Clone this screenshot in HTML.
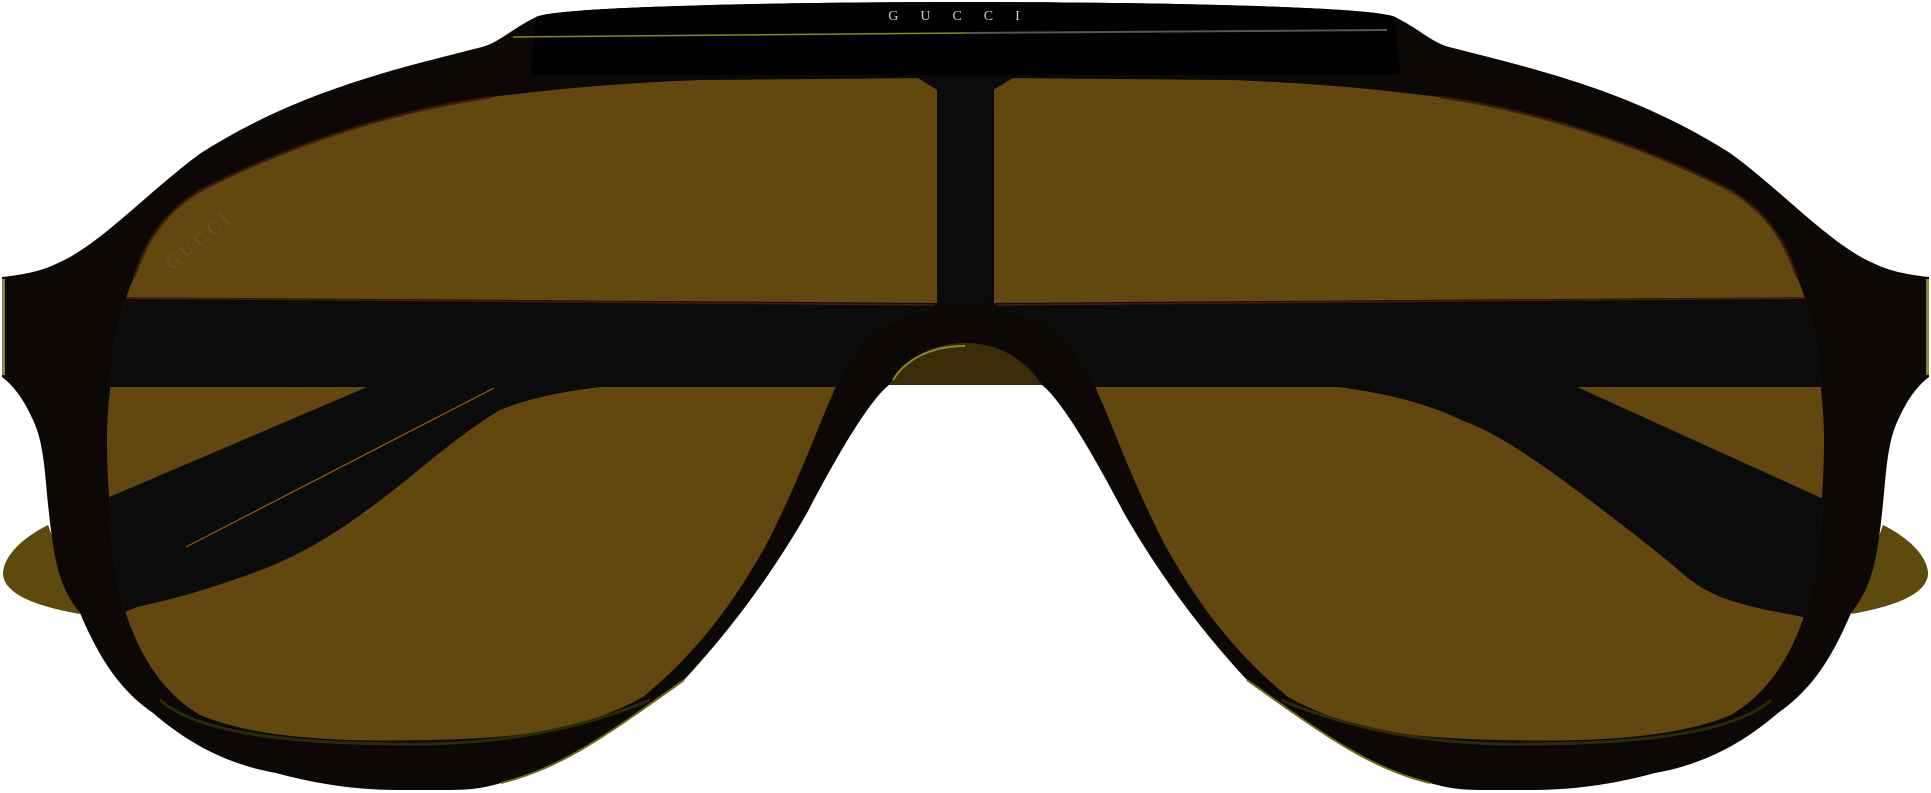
<!DOCTYPE html>
<html><head><meta charset="utf-8"><style>
html,body{margin:0;padding:0;background:#fff;width:1931px;height:793px;overflow:hidden}
svg{display:block}
</style></head><body>
<svg width="1931" height="793" viewBox="0 0 1931 793" xmlns="http://www.w3.org/2000/svg">
<defs>
<clipPath id="lensL"><path id="pl" d="M937,78 L700,80 C600,84 550,90 491,97 C400,110 300,140 201,190 C160,215 145,245 134,277 C120,310 112,350 110,390 C105,430 107,470 110,510 C112,600 140,680 200,715 C260,740 350,742 430,740 C480,739 520,736 551,730 C590,722 620,710 643,697 C700,650 735,600 765,547 C800,480 820,420 839,380 C855,345 880,318 926,310 L937,303 Z"/></clipPath>
<clipPath id="lensR"><path id="pr" d="M994,78 L1231,80 C1331,84 1381,90 1440,97 C1531,110 1631,140 1730,190 C1771,215 1786,245 1797,277 C1811,310 1819,350 1821,390 C1826,430 1824,470 1821,510 C1819,600 1791,680 1731,715 C1671,740 1581,742 1501,740 C1451,739 1411,736 1380,730 C1341,722 1311,710 1288,697 C1231,650 1196,600 1166,547 C1131,480 1111,420 1092,380 C1076,345 1051,318 1005,310 L994,303 Z"/></clipPath>
</defs>
<!-- temple tips -->
<path d="M48,525 C22,538 5,555 3,572 C2,595 40,607 80,614 Z" fill="#5e4a0c"/>
<path d="M1883,525 C1909,538 1926,555 1928,572 C1929,595 1891,607 1851,614 Z" fill="#5e4a0c"/>
<!-- frame silhouette -->
<path d="M965,2 C800,2 560,6 536,17 C510,30 500,42 482,47 C400,68 300,90 201,153 C150,190 100,245 58,263 C40,272 20,275 2,277 L2,377 C10,383 22,395 33,420 C45,445 45,480 49,513 C55,570 62,590 80,613 C100,660 120,690 153,713 C190,745 230,765 276,773 C320,785 360,790 398,790 L440,790 C470,790 480,789 501,783 C560,768 600,740 684,680 C740,620 780,560 807,513 C840,450 870,400 889,385 L1042,385 C1061,400 1091,450 1124,513 C1151,560 1191,620 1247,680 C1331,740 1371,768 1430,783 C1451,789 1461,790 1491,790 L1533,790 C1571,790 1611,785 1655,773 C1701,765 1741,745 1778,713 C1811,690 1831,660 1851,613 C1869,590 1876,570 1882,513 C1886,480 1886,445 1898,420 C1909,395 1921,383 1929,377 L1929,277 C1911,275 1891,272 1873,263 C1831,245 1781,190 1730,153 C1631,90 1531,68 1449,47 C1431,42 1421,30 1395,17 C1371,6 1131,2 965,2 Z" fill="#0b0805"/>
<rect x="2" y="279" width="3" height="96" fill="#8a8640"/>
<rect x="1926" y="279" width="3" height="96" fill="#8a8640"/>
<!-- top bar -->
<path d="M536,17 C560,6 800,2 965,2 C1131,2 1371,6 1395,17 L1400,75 L530,75 Z" fill="#020101"/>
<line x1="513" y1="37" x2="965" y2="33" stroke="#8a8a10" stroke-width="1.5"/>
<line x1="965" y1="33" x2="1387" y2="30" stroke="#555" stroke-width="2"/>
<text x="965" y="20" font-family="Liberation Serif,serif" font-size="14" fill="#d8cfb0" text-anchor="middle" letter-spacing="22">GUCCI</text>
<!-- lenses -->
<use href="#pl" fill="#62470f"/>
<use href="#pr" fill="#62470f"/>
<path d="M134,277 C145,245 160,215 201,190 C300,140 400,110 491,97" fill="none" stroke="#3a1a08" stroke-width="3" opacity="0.8"/>
<path d="M1797,277 C1786,245 1771,215 1730,190 C1631,140 1531,110 1440,97" fill="none" stroke="#3a1a08" stroke-width="3" opacity="0.8"/>
<!-- left lens contents -->
<g clip-path="url(#lensL)" fill="#0c0b0b">
<path d="M100,297 L940,303 L940,387 L100,387 Z"/>
<path d="M60,520 L107,498 L367,387 L600,387 C560,392 530,398 500,410 C450,440 410,480 367,510 C320,545 280,565 233,580 C190,595 160,602 137,607 L60,640 Z"/>
<line x1="186" y1="547" x2="494" y2="388" stroke="#9a5a10" stroke-width="1.2"/>
<line x1="100" y1="298" x2="940" y2="305" stroke="#4a1a08" stroke-width="1.5"/>
</g>
<g clip-path="url(#lensR)" fill="#0c0b0b">
<path d="M990,303 L1831,297 L1831,387 L990,387 Z"/>
<path d="M1320,385 L1577,387 L1870,520 L1870,630 L1767,610 C1720,600 1700,590 1675,567 C1630,530 1590,500 1553,473 C1520,450 1490,430 1461,420 C1420,400 1370,390 1320,385 Z"/>
<line x1="990" y1="305" x2="1831" y2="298" stroke="#4a1a08" stroke-width="1.5"/>
</g>
<!-- bridge bar -->
<path d="M918,78 L1013,78 L993,90 L991,303 L937,303 L937,90 Z" fill="#0c0b0b"/>
<!-- nose pad area -->
<path d="M889,385 C905,360 930,343 965,343 C1000,343 1026,360 1042,385 Z" fill="#3a2c08"/>
<path d="M893,380 C905,360 930,346 965,346" fill="none" stroke="#8a8a18" stroke-width="2"/>
<!-- rim highlights -->
<path d="M160,700 C200,735 300,745 430,744 C520,742 590,725 650,700" fill="none" stroke="#2a2a05" stroke-width="3"/>
<path d="M1771,700 C1731,735 1631,745 1501,744 C1411,742 1341,725 1281,700" fill="none" stroke="#2a2a05" stroke-width="3"/>
<path d="M501,783 C560,768 600,740 684,680" fill="none" stroke="#6a6a10" stroke-width="2"/>
<path d="M1430,783 C1371,768 1331,740 1247,680" fill="none" stroke="#6a6a10" stroke-width="2"/>
<text x="172" y="270" font-family="Liberation Serif,serif" font-size="18" fill="#6e5520" transform="rotate(-40 172 270)" letter-spacing="5">GUCCI</text>
</svg>
</body></html>
